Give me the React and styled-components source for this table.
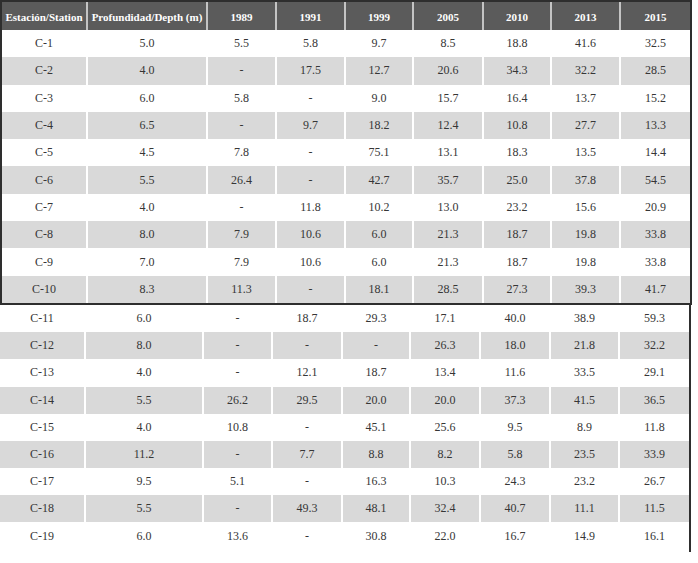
import React from "react";
import styled, {createGlobalStyle} from "styled-components";

const GlobalStyle = createGlobalStyle`
    html, body {
        margin: 0;
        padding: 0;
        background: #ffffff;
    }
    body {
        font-family: "Liberation Serif", "Times New Roman", serif;
        color: #333333;
    }
`;

const TOP_COLUMNS = [86, 120, 69, 69, 68, 70, 68, 69, 69];
const BOTTOM_COLUMNS = [86, 118, 69, 70, 68, 70, 70, 69, 69];

const headers = ["Estación/Station", "Profundidad/Depth (m)", "1989", "1991", "1999", "2005", "2010", "2013", "2015"];

const topRows = [
    ["C-1", "5.0", "5.5", "5.8", "9.7", "8.5", "18.8", "41.6", "32.5"],
    ["C-2", "4.0", "-", "17.5", "12.7", "20.6", "34.3", "32.2", "28.5"],
    ["C-3", "6.0", "5.8", "-", "9.0", "15.7", "16.4", "13.7", "15.2"],
    ["C-4", "6.5", "-", "9.7", "18.2", "12.4", "10.8", "27.7", "13.3"],
    ["C-5", "4.5", "7.8", "-", "75.1", "13.1", "18.3", "13.5", "14.4"],
    ["C-6", "5.5", "26.4", "-", "42.7", "35.7", "25.0", "37.8", "54.5"],
    ["C-7", "4.0", "-", "11.8", "10.2", "13.0", "23.2", "15.6", "20.9"],
    ["C-8", "8.0", "7.9", "10.6", "6.0", "21.3", "18.7", "19.8", "33.8"],
    ["C-9", "7.0", "7.9", "10.6", "6.0", "21.3", "18.7", "19.8", "33.8"],
    ["C-10", "8.3", "11.3", "-", "18.1", "28.5", "27.3", "39.3", "41.7"],
];

const bottomRows = [
    ["C-11", "6.0", "-", "18.7", "29.3", "17.1", "40.0", "38.9", "59.3"],
    ["C-12", "8.0", "-", "-", "-", "26.3", "18.0", "21.8", "32.2"],
    ["C-13", "4.0", "-", "12.1", "18.7", "13.4", "11.6", "33.5", "29.1"],
    ["C-14", "5.5", "26.2", "29.5", "20.0", "20.0", "37.3", "41.5", "36.5"],
    ["C-15", "4.0", "10.8", "-", "45.1", "25.6", "9.5", "8.9", "11.8"],
    ["C-16", "11.2", "-", "7.7", "8.8", "8.2", "5.8", "23.5", "33.9"],
    ["C-17", "9.5", "5.1", "-", "16.3", "10.3", "24.3", "23.2", "26.7"],
    ["C-18", "5.5", "-", "49.3", "48.1", "32.4", "40.7", "11.1", "11.5"],
    ["C-19", "6.0", "13.6", "-", "30.8", "22.0", "16.7", "14.9", "16.1"],
];

const Page = styled.div`
    width: 698px;
    height: 563px;
    overflow: hidden;
    display: flex;
    flex-direction: column;
    align-items: flex-start;
`;

const FramedTable = styled.div`
    border: 2px solid #2e2e2e;
    display: flex;
    flex-direction: column;
`;

const OpenTable = styled.div`
    border-right: 2px solid #2e2e2e;
    padding-bottom: 2px;
    display: flex;
    flex-direction: column;
`;

const Row = styled.div`
    display: grid;
    grid-template-columns: ${props => props.$columns.map(w => `${w}px`).join(" ")};
    height: ${props => props.$height}px;
    background: ${props => props.$shaded ? "#d9d9d9" : "#ffffff"};
`;

const HeaderRow = styled(Row)`
    background: #5b5b5b;
`;

const Cell = styled.div`
    display: flex;
    align-items: center;
    justify-content: center;
    font-size: 12px;
    white-space: nowrap;
    color: #363636;
    border-right: 2px solid #ffffff;
    &:last-child {
        border-right: none;
    }
`;

const HeaderCell = styled(Cell)`
    color: #ffffff;
    font-weight: bold;
    font-size: 11px;
    padding-top: 2px;
    border-right-color: #c4c4c4;
`;

const DataRows = ({rows, columns, height}) => rows.map((row, index) => (
    <Row key={row[0]} $columns={columns} $height={height} $shaded={index % 2 === 1}>
        {row.map((value, i) => <Cell key={i}>{value}</Cell>)}
    </Row>
));

const App = () => {
    return (
        <Page>
            <GlobalStyle />
            <FramedTable>
                <HeaderRow $columns={TOP_COLUMNS} $height={28}>
                    {headers.map(title => <HeaderCell key={title}>{title}</HeaderCell>)}
                </HeaderRow>
                <DataRows rows={topRows} columns={TOP_COLUMNS} height={27.3} />
            </FramedTable>
            <OpenTable>
                <DataRows rows={bottomRows} columns={BOTTOM_COLUMNS} height={27.2} />
            </OpenTable>
        </Page>
    );
};

export default App;
